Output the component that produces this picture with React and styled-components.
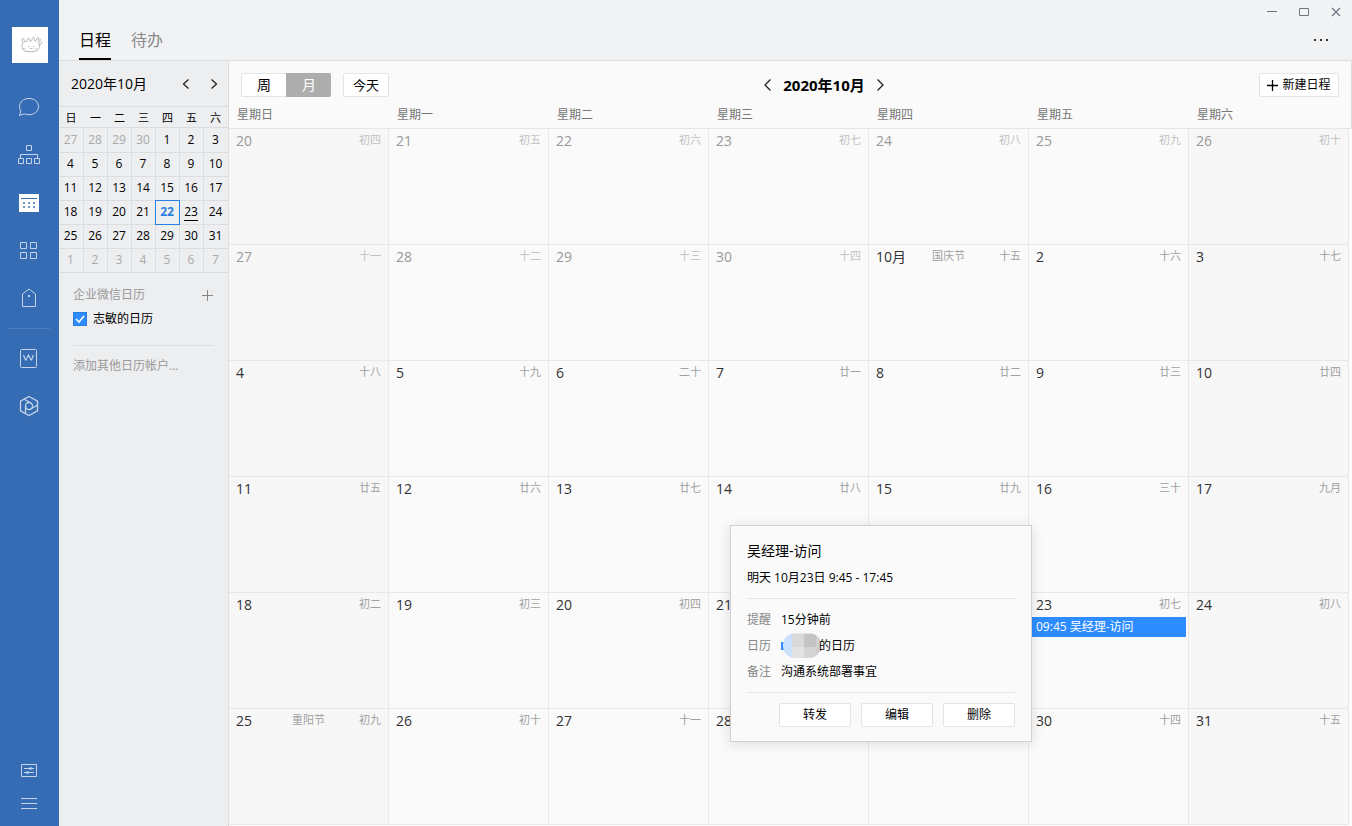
import React, { useState } from "react";
import styled, { createGlobalStyle, css } from "styled-components";

const GlobalStyle = createGlobalStyle`
  * {
    box-sizing: border-box;
  }
  body {
    margin: 0;
    background: #fdfdfd;
    color: #000;
    font-family: "Open Sans", "Noto Sans CJK SC", sans-serif;
    font-size: 12px;
    line-height: 20px;
  }
  button, input {
    font: inherit;
    color: inherit;
    margin: 0;
  }
  svg {
    display: block;
  }
`;

const Window = styled.div`
  display: flex;
  min-height: 100vh;
`;

// ---- blue navigation rail ----

const Rail = styled.nav`
  display: flex;
  flex-direction: column;
  align-items: center;
  flex: 0 0 59px;
  padding: 27px 1px 7px 0;
  background: #366cb4;
`;

const Avatar = styled.div`
  width: 36px;
  height: 36px;
  margin: 0 0 20px 2px;
  background: #fff;
`;

const RailButton = styled.button`
  display: flex;
  align-items: center;
  justify-content: center;
  width: 100%;
  height: ${p => (p.$small ? 32 : 48)}px;
  padding: 0;
  border: 0;
  background: none;
  color: ${p => (p.$active ? "#fff" : "#c5d4ea")};
  cursor: pointer;
`;

const RailLine = styled.div`
  width: 41px;
  height: 1px;
  margin: 5px 0;
  background: #4e7ebd;
`;

const RailSpacer = styled.div`
  flex: 1;
`;

// ---- top bar ----

const Page = styled.div`
  display: flex;
  flex-direction: column;
  flex: 1;
  min-width: 0;
`;

const TopBar = styled.header`
  display: flex;
  justify-content: space-between;
  height: 61px;
  background: #f1f2f4;
  border-bottom: 1px solid #dcdddf;
`;

const Tabs = styled.div`
  display: flex;
  align-items: flex-end;
  gap: 20px;
  padding-left: 20px;
`;

const Tab = styled.button`
  height: 38px;
  padding: 0;
  border: 0;
  border-bottom: 2px solid ${p => (p.$active ? "#000" : "transparent")};
  background: none;
  color: ${p => (p.$active ? "#000" : "#888")};
  font-size: 16px;
  line-height: 36px;
  cursor: pointer;
`;

const WindowTools = styled.div`
  display: flex;
  flex-direction: column;
  align-items: flex-end;
`;

const WindowButtons = styled.div`
  display: flex;
`;

const IconButton = styled.button`
  display: flex;
  align-items: center;
  justify-content: center;
  width: ${p => p.$width || 32}px;
  height: 24px;
  padding: 0;
  border: 0;
  background: none;
  color: ${p => p.$color || "#222"};
  cursor: pointer;
`;

const MoreRow = styled.div`
  padding: 4px 15px 0 0;
`;

const Content = styled.div`
  display: flex;
  flex: 1;
`;

// ---- left panel ----

const Panel = styled.aside`
  flex: 0 0 170px;
  background: #edeef0;
  border-right: 1px solid #dcdddf;
`;

const PanelHead = styled.div`
  display: flex;
  align-items: center;
  height: 46px;
  padding-left: 12px;
  border-bottom: 1px solid #dcdddf;
  font-size: 14px;
`;

const PanelTitle = styled.span`
  flex: 1;
`;

const MiniTable = styled.table`
  width: 169px;
  border-collapse: separate;
  border-spacing: 0;
  table-layout: fixed;
  text-align: center;
`;

const MiniHead = styled.th`
  width: 24px;
  height: 21px;
  padding: 1px 1px 0 0;
  border-bottom: 1px solid #dcdddf;
  font-weight: 400;
  font-size: 11px;
  line-height: 19px;

  &:first-child {
    width: 25px;
  }
`;

const MiniDay = styled.td`
  position: relative;
  height: 24px;
  padding: 0 1px 1px 0;
  border-right: 1px solid #dcdddf;
  border-bottom: 1px solid #dcdddf;
  color: ${p => (p.$muted ? "#aaa" : "#000")};
  line-height: 22px;

  &:last-child {
    border-right: 0;
  }
  tr:first-child > & {
    height: 25px;
  }

  ${p =>
    p.$today &&
    css`
      color: #2a7de1;
      font-weight: 700;

      &::after {
        content: "";
        position: absolute;
        inset: -1px;
        border: 1px solid #2a7de1;
      }
    `}
`;

const Marked = styled.span`
  display: inline-block;
  height: 20px;
  border-bottom: 1px solid #000;
  vertical-align: top;
`;

const Accounts = styled.div`
  padding: 10px 14px 0;
`;

const AccountsHead = styled.div`
  display: flex;
  align-items: center;
  justify-content: space-between;
  height: 24px;
  padding-right: 1px;
  color: #999;
`;

const CalendarToggle = styled.label`
  display: flex;
  align-items: center;
  gap: 6px;
  height: 24px;
`;

const CheckBox = styled.input`
  appearance: none;
  width: 14px;
  height: 14px;
  border: 1px solid #2b7de0;
  background: #fff;

  &:checked {
    background: #2d8cff
      url("data:image/svg+xml,%3Csvg xmlns='http://www.w3.org/2000/svg' viewBox='0 0 12 12'%3E%3Cpath d='M2 6l3 3 5-6' fill='none' stroke='white' stroke-width='1.6'/%3E%3C/svg%3E");
  }
`;

const AddAccount = styled.a`
  display: block;
  margin-top: 14px;
  padding-top: 10px;
  border-top: 1px solid #dcdddf;
  color: #999;
  text-decoration: none;
`;

// ---- month view ----

const Main = styled.main`
  flex: 1;
  min-width: 0;
`;

const Toolbar = styled.div`
  display: flex;
  align-items: center;
  justify-content: space-between;
  padding: 12px 12px 7px;
  background: #fafafa;
  border-right: 1px solid #dcdddf;
`;

const ToolGroup = styled.div`
  display: flex;
  gap: 12px;
`;

const Switch = styled.div`
  display: flex;
`;

const Button = styled.button`
  display: flex;
  align-items: center;
  justify-content: center;
  gap: 4px;
  width: ${p => p.$width}px;
  height: 24px;
  padding: 0;
  border: 1px solid #e4e4e4;
  border-radius: 2px;
  background: #fff;
  font-size: ${p => p.$size || 12}px;
  line-height: 22px;
  cursor: pointer;
`;

const SwitchButton = styled(Button)`
  border-radius: 2px 0 0 2px;
  border-right: 0;

  & + & {
    border-radius: 0 2px 2px 0;
  }
  ${p =>
    p.$active &&
    css`
      border-color: #adadad;
      background: #adadad;
      color: #fff;
    `}
`;

const MonthNav = styled.div`
  display: flex;
  align-items: center;
  height: 24px;
`;

const MonthTitle = styled.h1`
  margin: 0;
  font-size: 15px;
  line-height: 24px;
`;

const MonthTable = styled.table`
  width: 100%;
  border-collapse: separate;
  border-spacing: 0;
  table-layout: fixed;
`;

const DayName = styled.th`
  height: 25px;
  padding: 0 0 2px 8px;
  border-bottom: 1px solid #e6e6e6;
  background: #fafafa;
  color: #777;
  font-weight: 400;
  text-align: left;
`;

const Gutter = styled.td`
  width: 3px;
  padding: 0;
  ${p =>
    p.$head &&
    css`
      background: #fafafa;
      border-right: 1px solid #dcdddf;
      border-bottom: 1px solid #e6e6e6;
    `}
`;

const Day = styled.td`
  position: relative;
  height: 116px;
  padding: 0;
  border-right: 1px solid #e8e8e8;
  border-bottom: 1px solid #e8e8e8;
  background: ${p => (p.$weekend ? "#f7f7f7" : "#fafafa")};
  color: ${p => (p.$muted ? "#999" : "#333")};
  vertical-align: top;
`;

const DayHead = styled.div`
  display: grid;
  grid-template-columns: 1fr auto 1fr;
  height: 24px;
  padding: 0 7px;
  font-size: 14px;
  line-height: 24px;
`;

const Lunar = styled.span`
  color: ${p => (p.$muted ? "#c2c2c2" : "#a0a0a0")};
  font-size: 11px;
  line-height: 22px;
  text-align: right;
`;

const EventBar = styled.button`
  display: block;
  width: calc(100% - 2px);
  height: 20px;
  padding: 0 7px;
  border: 0;
  background: #2d8cff;
  color: #fff;
  line-height: 20px;
  text-align: left;
  cursor: pointer;
`;

// ---- event popover ----

const Popover = styled.section`
  position: absolute;
  z-index: 2;
  top: -68px;
  right: calc(100% - 3px);
  width: 302px;
  padding: 12px 16px 14px;
  border: 1px solid #d0d0d0;
  background: #fafafa;
  box-shadow: 0 2px 12px rgba(0, 0, 0, 0.12);
  color: #000;
  line-height: 26px;
`;

const PopTitle = styled.h2`
  margin: 0;
  font-size: 14px;
  font-weight: 400;
  line-height: 26px;
`;

const PopTime = styled.div`
  line-height: 28px;
`;

const Facts = styled.dl`
  display: grid;
  grid-template-columns: 24px 1fr;
  column-gap: 10px;
  margin: 6px 0 8px;
  padding: 8px 0 7px;
  border: solid #e4e4e4;
  border-width: 1px 0;
`;

const FactName = styled.dt`
  color: #888;
`;

const FactValue = styled.dd`
  display: flex;
  margin: 0;
`;

const PopActions = styled.div`
  display: flex;
  justify-content: flex-end;
  gap: 10px;
  padding-top: 2px;
`;

const Stroke = ({ width, height = width, children, weight = 1 }) => (
  <svg
    width={width}
    height={height}
    viewBox={`0 0 ${width} ${height}`}
    fill="none"
    stroke="currentColor"
    strokeWidth={weight}
    aria-hidden="true"
  >
    {children}
  </svg>
);

const ChevronLeft = ({ size = 12 }) => (
  <Stroke width={size} weight={1.3}>
    <path d={size === 12 ? "M8.5 1.5L3.5 6l5 4.5" : "M9.5 1.5L4 7l5.5 5.5"} />
  </Stroke>
);

const ChevronRight = ({ size = 12 }) => (
  <Stroke width={size} weight={1.3}>
    <path d={size === 12 ? "M3.5 1.5L8.5 6l-5 4.5" : "M4.5 1.5L10 7l-5.5 5.5"} />
  </Stroke>
);

const Plus = ({ weight }) => (
  <Stroke width={11} weight={weight}>
    <path d="M5.5 0v11M0 5.5h11" />
  </Stroke>
);

const icons = {
  chat: (
    <Stroke width={20}>
      <path d="M.5 18.5L1.900 14.2A8.600 8.600 0 0 1 .5 9.600C.5 4.900 4.600 1.500 10 1.500s9.500 3.400 9.500 8.100-4.200 8.100-9.500 8.100c-1.500 0-3-.2-4.400-.8z" />
    </Stroke>
  ),
  contacts: (
    <Stroke width={22} height={20}>
      <path d="M8.500.5h5v5h-5zM.5 13.500h5v5h-5zM8.500 13.500h5v5h-5zM16.500 13.500h5v5h-5zM2.500 13.500v-4h17v4" />
    </Stroke>
  ),
  calendar: (
    <svg width="20" height="18" viewBox="0 0 20 18" aria-hidden="true">
      <path fill="#fff" d="M0 0h20v18H0z" />
      <path fill="#366cb4" d="M2 4h16v1H2z" />
      <path
        fill="#6f97ca"
        d="M4 8h2v2H4zM9 8h2v2H9zM14 8h2v2h-2zM4 12h2v2H4zM9 12h2v2H9zM14 12h2v2h-2z"
      />
    </svg>
  ),
  apps: (
    <Stroke width={18}>
      <path d="M.5.5h6v6h-6zM10.500.5h6v6h-6zM.5 10.500h6v6h-6zM10.500 10.500h6v6h-6z" />
    </Stroke>
  ),
  tag: (
    <Stroke width={14} height={22}>
      <path d="M.5 18.500V6L7 1l6.500 5v12.500z" />
      <path fill="currentColor" stroke="none" d="M6 7h2v2H6z" />
    </Stroke>
  ),
  doc: (
    <Stroke width={18} height={20}>
      <rect x=".5" y="1.5" width="16" height="18" rx="1" />
      <path strokeWidth="1.2" d="M3.500 7l2 5h.5l2.500-5 2.500 5h.5l2-5" />
    </Stroke>
  ),
  disk: (
    <Stroke width={20} height={22} weight={1.3}>
      <path d="M10 1.500l8.500 4.700v9.600L10 20.500l-8.500-4.700V6.200z" />
      <circle cx="10" cy="11" r="3.500" />
      <path d="M6.500 11v7.500M11.750 8L5.300 4.200M11.750 14l6.500-3.700" />
    </Stroke>
  ),
  settings: (
    <Stroke width={16} height={14}>
      <path d="M.5.5h15v12H.5zM3 4.500h10M3 8.500h10" />
      <path d="M8.500 3.500h2v2h-2zM5.500 7.500h2v2h-2z" strokeOpacity=".6" />
    </Stroke>
  ),
  menu: (
    <Stroke width={16} height={12}>
      <path d="M0 1.500h16M0 6.500h16M0 11.500h16" />
    </Stroke>
  )
};

const AvatarSketch = () => (
  <svg width="36" height="36" viewBox="0 0 36 36" fill="none" stroke="#aaa" aria-hidden="true">
    <path
      strokeWidth=".9"
      d="M11 16c-2 3-1 7 2 8 4 1 9 1 12-.5 3-2 3-6 1-8M11 16c-.5-2-1.500-4-.5-4.500s2 2 2.500 3.500c1 .5 1.500 0 2-1.500.5-1.500 1-2.500 1.500-2.500s1 2 1.500 3.500c1 0 1.500-.5 2-2s1-2.500 1.500-2.500 1 2 1.500 4c1 0 1.500-.5 2-2s1-2 1.500-1 0 2.500 1 4.500M27 18c2 0 3-2 2.500-3.500M28 12l.5 1.500"
    />
    <path strokeWidth=".8" d="M16 19.500h1.500M21 19.500h1.500M18 21.500h2.500" />
    <path stroke="#ecc3c6" strokeWidth="1.200" d="M11 21.500h2.500M23 21.500h2" />
  </svg>
);

// pixelated owner name in the popover
const MaskedName = () => (
  <svg width="38" height="26" viewBox="0 0 38 26" overflow="visible" aria-hidden="true">
    <defs>
      <clipPath id="mask">
        <rect x="2" y="0" width="38" height="25" rx="12" />
      </clipPath>
    </defs>
    <path fill="#2d8cff" d="M0 9h4v8H0z" />
    <g clipPath="url(#mask)">
      <path fill="#cbe1fb" d="M0 0h11v26H0z" />
      <path fill="#d9d9d9" d="M11 0h12v14H11z" />
      <path fill="#c4c4c4" d="M23 0h12v14H23z" />
      <path fill="#e2e2e2" d="M11 14h12v12H11z" />
      <path fill="#d4d4d4" d="M23 14h12v12H23z" />
      <path fill="#cfcfcf" d="M35 0h6v26h-6z" />
      <path fill="#e6e7e8" d="M0 0h41v1H0z" />
    </g>
  </svg>
);

const navItems = [
  ["chat", "消息"],
  ["contacts", "通讯录"],
  ["calendar", "日程"],
  ["apps", "工作台"],
  ["tag", "客户"]
];

const weekdays = ["日", "一", "二", "三", "四", "五", "六"];

const toWeeks = days =>
  [0, 1, 2, 3, 4, 5].map(i => days.slice(i * 7, i * 7 + 7));

const range = (from, to) =>
  Array.from({ length: to - from + 1 }, (_, i) => from + i);

const miniWeeks = toWeeks([
  ...range(27, 30).map(n => ({ n, muted: true })),
  ...range(1, 31).map(n => ({ n })),
  ...range(1, 7).map(n => ({ n, muted: true }))
]);

const lunar = (
  "初四 初五 初六 初七 初八 初九 初十 " +
  "十一 十二 十三 十四 十五 十六 十七 " +
  "十八 十九 二十 廿一 廿二 廿三 廿四 " +
  "廿五 廿六 廿七 廿八 廿九 三十 九月 " +
  "初二 初三 初四 初五 初六 初七 初八 " +
  "初九 初十 十一 十二 十三 十四 十五"
).split(" ");

const festivals = { 1: "国庆节", 25: "重阳节" };

const monthWeeks = toWeeks(
  [
    ...range(20, 30).map(n => ({ n, muted: true })),
    ...range(1, 31).map(n => ({ n, festival: festivals[n] }))
  ].map((day, i) => ({ ...day, lunar: lunar[i] }))
);

const MiniCalendar = () => (
  <MiniTable>
    <thead>
      <tr>
        {weekdays.map(w => (
          <MiniHead key={w} scope="col">
            {w}
          </MiniHead>
        ))}
      </tr>
    </thead>
    <tbody>
      {miniWeeks.map((week, i) => (
        <tr key={i}>
          {week.map(({ n, muted }) => (
            <MiniDay key={n} $muted={muted} $today={n === 22}>
              {n === 23 ? <Marked>{n}</Marked> : n}
            </MiniDay>
          ))}
        </tr>
      ))}
    </tbody>
  </MiniTable>
);

const EventPopover = () => (
  <Popover>
    <PopTitle>吴经理-访问</PopTitle>
    <PopTime>明天 10月23日 9:45 - 17:45</PopTime>
    <Facts>
      <FactName>提醒</FactName>
      <FactValue>15分钟前</FactValue>
      <FactName>日历</FactName>
      <FactValue>
        <MaskedName />
        的日历
      </FactValue>
      <FactName>备注</FactName>
      <FactValue>沟通系统部署事宜</FactValue>
    </Facts>
    <PopActions>
      <Button $width={72}>转发</Button>
      <Button $width={72}>编辑</Button>
      <Button $width={72}>删除</Button>
    </PopActions>
  </Popover>
);

const MonthGrid = ({ open, onToggle }) => (
  <MonthTable>
    <thead>
      <tr>
        {weekdays.map(w => (
          <DayName key={w} scope="col">
            星期{w}
          </DayName>
        ))}
        <Gutter $head />
      </tr>
    </thead>
    <tbody>
      {monthWeeks.map((week, i) => (
        <tr key={i}>
          {week.map((day, col) => (
            <Day key={col} $muted={day.muted} $weekend={col === 0 || col === 6}>
              <DayHead>
                <span>{day.n === 1 ? "10月" : day.n}</span>
                <Lunar>{day.festival}</Lunar>
                <Lunar $muted={day.muted}>{day.lunar}</Lunar>
              </DayHead>
              {day.n === 23 && !day.muted && (
                <>
                  <EventBar onClick={onToggle}>09:45 吴经理-访问</EventBar>
                  {open && <EventPopover />}
                </>
              )}
            </Day>
          ))}
          <Gutter />
        </tr>
      ))}
    </tbody>
  </MonthTable>
);

const App = () => {
  const [open, setOpen] = useState(true);
  const [view, setView] = useState("月");
  const [shown, setShown] = useState(true);

  return (
    <Window>
      <GlobalStyle />
      <Rail>
        <Avatar>
          <AvatarSketch />
        </Avatar>
        {navItems.map(([icon, label]) => (
          <RailButton key={icon} aria-label={label} $active={icon === "calendar"}>
            {icons[icon]}
          </RailButton>
        ))}
        <RailLine />
        <RailButton aria-label="微文档">{icons.doc}</RailButton>
        <RailButton aria-label="微盘">{icons.disk}</RailButton>
        <RailSpacer />
        <RailButton $small aria-label="设置">
          {icons.settings}
        </RailButton>
        <RailButton $small aria-label="菜单">
          {icons.menu}
        </RailButton>
      </Rail>
      <Page>
        <TopBar>
          <Tabs>
            <Tab $active>日程</Tab>
            <Tab>待办</Tab>
          </Tabs>
          <WindowTools>
            <WindowButtons>
              <IconButton aria-label="最小化" $color="#6d7683">
                <Stroke width={10}>
                  <path d="M0 4.500h10" />
                </Stroke>
              </IconButton>
              <IconButton aria-label="最大化" $color="#6d7683">
                <Stroke width={10}>
                  <path d="M.5 1.500h9v7h-9z" />
                </Stroke>
              </IconButton>
              <IconButton aria-label="关闭" $color="#6d7683">
                <Stroke width={10} weight={1.2}>
                  <path d="M1 1l8 8M9 1L1 9" />
                </Stroke>
              </IconButton>
            </WindowButtons>
            <MoreRow>
              <IconButton aria-label="更多">
                <svg width="14" height="2" viewBox="0 0 14 2" fill="#333">
                  <path d="M0 0h2v2H0zM6 0h2v2H6zM12 0h2v2h-2z" />
                </svg>
              </IconButton>
            </MoreRow>
          </WindowTools>
        </TopBar>
        <Content>
          <Panel>
            <PanelHead>
              <PanelTitle>2020年10月</PanelTitle>
              <IconButton $width={28} aria-label="上个月">
                <ChevronLeft />
              </IconButton>
              <IconButton $width={28} aria-label="下个月">
                <ChevronRight />
              </IconButton>
            </PanelHead>
            <MiniCalendar />
            <Accounts>
              <AccountsHead>
                企业微信日历
                <IconButton $width={11} $color="#888" aria-label="新建日历">
                  <Plus />
                </IconButton>
              </AccountsHead>
              <CalendarToggle>
                <CheckBox
                  type="checkbox"
                  checked={shown}
                  onChange={() => setShown(!shown)}
                />
                志敏的日历
              </CalendarToggle>
              <AddAccount href="#accounts">添加其他日历帐户...</AddAccount>
            </Accounts>
          </Panel>
          <Main>
            <Toolbar>
              <ToolGroup>
                <Switch>
                  {["周", "月"].map(v => (
                    <SwitchButton
                      key={v}
                      $width={45}
                      $size={14}
                      $active={v === view}
                      onClick={() => setView(v)}
                    >
                      {v}
                    </SwitchButton>
                  ))}
                </Switch>
                <Button $width={46} $size={13}>
                  今天
                </Button>
              </ToolGroup>
              <MonthNav>
                <IconButton $width={30} aria-label="上个月">
                  <ChevronLeft size={14} />
                </IconButton>
                <MonthTitle>2020年10月</MonthTitle>
                <IconButton $width={30} aria-label="下个月">
                  <ChevronRight size={14} />
                </IconButton>
              </MonthNav>
              <Button $width={80}>
                <Plus weight={1.3} />
                新建日程
              </Button>
            </Toolbar>
            <MonthGrid open={open} onToggle={() => setOpen(!open)} />
          </Main>
        </Content>
      </Page>
    </Window>
  );
};

export default App;
